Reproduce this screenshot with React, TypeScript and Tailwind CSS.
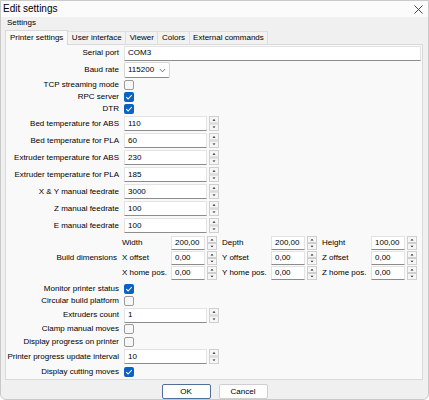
import React from "react";

const FONT = { fontFamily: '"Liberation Sans", Arial, sans-serif' };

function Check({ on }: { on?: boolean }) {
  if (on) {
    return (
      <div className="w-[10px] h-[10px] rounded-[2px] bg-[#0a63c4] flex items-center justify-center">
        <svg width="8" height="8" viewBox="0 0 8 8">
          <path d="M1.3 4.2 L3.1 6 L6.8 2" fill="none" stroke="#fff" strokeWidth="1.1" />
        </svg>
      </div>
    );
  }
  return <div className="w-[10px] h-[10px] rounded-[2px] bg-[#f7f7f7] border border-[#9a9a9a]" />;
}

function Spinner({ h = 15 }: { h?: number }) {
  const half = (h - 1) / 2;
  return (
    <svg width="10" height={h} viewBox={`0 0 10 ${h}`} className="ml-[2px] shrink-0">
      <rect x="0.5" y="0.5" width="9" height={half - 0.5} fill="#f6f6f6" stroke="#cfcfcf" />
      <rect x="0.5" y={half + 1} width="9" height={half - 0.5} fill="#f6f6f6" stroke="#cfcfcf" />
      <path d={`M3.5 ${half * 0.5 + 1.2} L5 ${half * 0.5 - 0.4} L6.5 ${half * 0.5 + 1.2} Z`} fill="#222" />
      <path d={`M3.5 ${half + 1 + half * 0.5 - 1} L6.5 ${half + 1 + half * 0.5 - 1} L5 ${half + 1 + half * 0.5 + 0.6} Z`} fill="#222" />
    </svg>
  );
}

function Box({ value, w, h = 15 }: { value: string; w: string; h?: number }) {
  return (
    <div
      className={`${w} bg-white border border-[#e3e3e3] border-b-[#8c8c8c] flex items-center pl-[3px] text-black`}
      style={{ height: h }}
    >
      {value}
    </div>
  );
}

function Row({ label, h, children }: { label: string; h: string; children?: React.ReactNode }) {
  return (
    <div className={`flex items-center ${h}`}>
      <div className="w-[113px] text-right whitespace-nowrap">{label}</div>
      <div className="ml-[5px] flex items-center">{children}</div>
    </div>
  );
}

function SpinRow({ label, value, h = "h-[17px]" }: { label: string; value: string; h?: string }) {
  return (
    <Row label={label} h={h}>
      <Box value={value} w="w-[83px]" />
      <Spinner />
    </Row>
  );
}

function DimCell({ label, value }: { label: string; value: string }) {
  return (
    <div className="flex items-center w-[100px]">
      <div className="w-[49px] whitespace-nowrap">{label}</div>
      <Box value={value} w="w-[34px]" h={14} />
      <Spinner h={14} />
    </div>
  );
}

export default function App() {
  return (
    <div
      className="w-[429px] h-[400px] overflow-hidden bg-[#f0f0f0] flex flex-col text-[8px] leading-none text-black border border-[#c9c9c9] rounded-b-[6px]"
      style={FONT}
    >
      {/* title bar */}
      <div className="h-[16px] bg-[#fbfbfb] flex items-center justify-between pl-[2px] pr-[5px] shrink-0">
        <span className="text-[10px] text-black">Edit settings</span>
        <svg width="9" height="9" viewBox="0 0 9 9">
          <path d="M0.5 0.5 L8.5 8.5 M8.5 0.5 L0.5 8.5" stroke="#333" strokeWidth="0.9" />
        </svg>
      </div>

      <div className="h-[11px] flex items-center pl-[6px] shrink-0">Settings</div>

      {/* tabs */}
      <div className="mt-[2px] h-[14px] flex items-end pl-[4px] shrink-0">
        <div className="h-[15px] -mb-px relative z-10 bg-[#f9f9f9] border border-b-0 border-[#d9d9d9] px-[4px] flex items-center">
          Printer settings
        </div>
        <div className="h-[13px] px-[3.5px] flex items-center border-t border-r border-[#dedede] bg-[#f2f2f2]">User interface</div>
        <div className="h-[13px] px-[3.5px] flex items-center border-t border-r border-[#dedede] bg-[#f2f2f2]">Viewer</div>
        <div className="h-[13px] px-[3.5px] flex items-center border-t border-r border-[#dedede] bg-[#f2f2f2]">Colors</div>
        <div className="h-[13px] px-[3.5px] flex items-center border-t border-r border-[#dedede] bg-[#f2f2f2]">External commands</div>
      </div>

      {/* panel */}
      <div className="ml-[4px] w-[418px] h-[336px] bg-[#f9f9f9] border border-[#d9d9d9] flex flex-col shrink-0">
        <Row label="Serial port" h="h-[16px]">
          <Box value="COM3" w="w-[297px]" />
        </Row>
        <Row label="Baud rate" h="h-[18px]">
          <div className="w-[46px] h-[16px] bg-white border border-[#d6d6d6] border-b-[#8c8c8c] rounded-[2px] flex items-center justify-between pl-[3px] pr-[3px]">
            <span>115200</span>
            <svg width="7" height="5" viewBox="0 0 7 5">
              <path d="M0.8 1 L3.5 3.8 L6.2 1" fill="none" stroke="#555" strokeWidth="0.8" />
            </svg>
          </div>
        </Row>
        <Row label="TCP streaming mode" h="h-[12px]"><Check /></Row>
        <Row label="RPC server" h="h-[12px]"><Check on /></Row>
        <Row label="DTR" h="h-[12px]"><Check on /></Row>
        <SpinRow label="Bed temperature for ABS" value="110" />
        <SpinRow label="Bed temperature for PLA" value="60" />
        <SpinRow label="Extruder temperature for ABS" value="230" />
        <SpinRow label="Extruder temperature for PLA" value="185" />
        <SpinRow label="X & Y manual feedrate" value="3000" />
        <SpinRow label="Z manual feedrate" value="100" />
        <SpinRow label="E manual feedrate" value="100" />

        {/* build dimensions */}
        <div className="flex items-center mt-[1px] h-[45px]">
          <div className="w-[113px] text-right whitespace-nowrap">Build dimensions</div>
          <div className="ml-[5px] flex flex-col">
            <div className="flex h-[15px] items-center">
              <DimCell label="Width" value="200,00" />
              <DimCell label="Depth" value="200,00" />
              <DimCell label="Height" value="100,00" />
            </div>
            <div className="flex h-[15px] items-center">
              <DimCell label="X offset" value="0,00" />
              <DimCell label="Y offset" value="0,00" />
              <DimCell label="Z offset" value="0,00" />
            </div>
            <div className="flex h-[15px] items-center">
              <DimCell label="X home pos." value="0,00" />
              <DimCell label="Y home pos." value="0,00" />
              <DimCell label="Z home pos." value="0,00" />
            </div>
          </div>
        </div>

        <div className="mt-[3px]" />
        <Row label="Monitor printer status" h="h-[12px]"><Check on /></Row>
        <Row label="Circular build platform" h="h-[12px]"><Check /></Row>
        <SpinRow label="Extruders count" value="1" h="h-[16px]" />
        <Row label="Clamp manual moves" h="h-[12px]"><Check /></Row>
        <Row label="Display progress on printer" h="h-[13px]"><Check /></Row>
        <SpinRow label="Printer progress update interval" value="10" />
        <Row label="Display cutting moves" h="h-[13px]"><Check on /></Row>
      </div>

      {/* buttons */}
      <div className="mt-[4px] flex justify-center gap-[8px] shrink-0">
        <div className="w-[49px] h-[15px] bg-[#fdfdfd] border border-[#4f6f96] rounded-[2px] flex items-center justify-center text-black">OK</div>
        <div className="w-[49px] h-[15px] bg-[#fdfdfd] border border-[#cfcfcf] rounded-[2px] flex items-center justify-center text-black">Cancel</div>
      </div>
    </div>
  );
}
